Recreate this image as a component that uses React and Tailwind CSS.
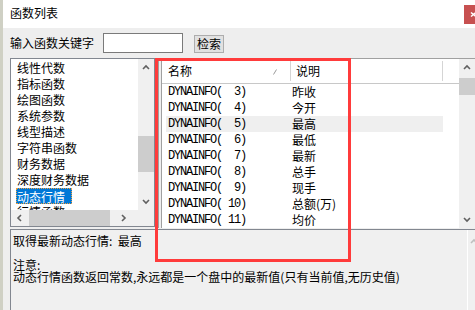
import React from "react";

const Chev = ({ dir = "up", color = "#606060" }) => {
  const paths = {
    up: "M1 5 L4 2 L7 5",
    down: "M1 2 L4 5 L7 2",
    left: "M5 1 L2 4 L5 7",
    right: "M2 1 L5 4 L2 7",
  };
  return (
    <svg width="8" height="8" viewBox="0 0 8 8">
      <path d={paths[dir]} fill="none" stroke={color} strokeWidth="1.6" />
    </svg>
  );
};

const listItems = [
  "线性代数",
  "指标函数",
  "绘图函数",
  "系统参数",
  "线型描述",
  "字符串函数",
  "财务数据",
  "深度财务数据",
  "动态行情",
  "行情函数",
];

const rows = [
  ["DYNAINFO(  3)", "昨收"],
  ["DYNAINFO(  4)", "今开"],
  ["DYNAINFO(  5)", "最高"],
  ["DYNAINFO(  6)", "最低"],
  ["DYNAINFO(  7)", "最新"],
  ["DYNAINFO(  8)", "总手"],
  ["DYNAINFO(  9)", "现手"],
  ["DYNAINFO( 10)", "总额(万)"],
  ["DYNAINFO( 11)", "均价"],
];

export default function App() {
  return (
    <div className="relative flex h-[310px] w-[475px] overflow-hidden bg-[#eeeeee] font-['Noto_Sans_CJK_SC',sans-serif] text-[12px] leading-[16px] text-black">
      <div className="w-[3px] shrink-0 bg-[#cfd0c4]" />
      <div className="flex min-w-0 flex-1 flex-col">
        {/* Title bar */}
        <div className="flex h-[28px] shrink-0 items-start justify-between bg-white">
          <span className="ml-[7px] mt-[5px]">函数列表</span>
          <div className="mt-[5px] flex h-[19px] w-[11px] items-center justify-end overflow-hidden bg-[#c75050]">
            <svg width="5" height="7" viewBox="0 0 5 7">
              <path d="M1 1.5 L6 5.5 M1 5.5 L6 1.5" stroke="white" strokeWidth="1.6" />
            </svg>
          </div>
        </div>

        {/* Search row */}
        <div className="flex h-[30px] shrink-0 items-start pl-[7px]">
          <span className="mt-[7px]">输入函数关键字</span>
          <div className="ml-[9px] mt-[5px] h-[20px] w-[80px] border border-[#7a7a7a] bg-white" />
          <button className="ml-[11px] mt-[7px] flex h-[18px] w-[30px] items-center justify-center border border-[#adadad] bg-[#e1e1e1] leading-[16px]">
            检索
          </button>
        </div>

        {/* Main area */}
        <div className="flex h-[170px] shrink-0 pl-[7px]">
          {/* Left list box */}
          <div className="flex h-[169px] w-[145px] shrink-0 flex-col border border-[#828790] bg-white">
            <div className="flex h-[151px]">
              <div className="flex w-[127px] flex-col overflow-hidden pl-[5px] pt-[1px]">
                {listItems.map((t) => (
                  <div key={t} className="h-[16px] shrink-0 whitespace-nowrap">
                    {t === "动态行情" ? (
                      <span className="inline-block h-[16px] w-[56px] border border-dotted border-[#f0a040] bg-[#0078d7] text-white">
                        {t}
                      </span>
                    ) : (
                      <span className="pl-[1px]">{t}</span>
                    )}
                  </div>
                ))}
              </div>
              <div className="flex w-[16px] flex-col bg-[#f0f0f0]">
                <div className="flex h-[17px] items-center justify-center">
                  <Chev dir="up" />
                </div>
                <div className="h-[60px]" />
                <div className="h-[36px] bg-[#cdcdcd]" />
                <div className="flex-1" />
                <div className="flex h-[17px] items-center justify-center">
                  <Chev dir="down" />
                </div>
              </div>
            </div>
            <div className="flex h-[16px]">
              <div className="flex w-[127px] bg-[#f0f0f0]">
                <div className="flex w-[17px] items-center justify-center">
                  <Chev dir="left" />
                </div>
                <div className="w-[1px]" />
                <div className="w-[81px] bg-[#cdcdcd]" />
                <div className="flex flex-1 items-center justify-center">
                  <Chev dir="right" />
                </div>
              </div>
              <div className="w-[16px] bg-[#f0f0f0]" />
            </div>
          </div>

          {/* Right list view */}
          <div className="ml-[3px] flex h-[170px] min-w-0 flex-1 border-l border-t border-[#a0a0a0]">
            <div className="ml-[2px] flex min-w-0 flex-1 flex-col overflow-hidden border-l border-[#a0a0a0] bg-white">
              <div className="flex h-[25px] shrink-0 items-center border-b border-[#c8c8c8]">
                <div className="relative flex h-[20px] w-[128px] items-center pl-[6px]">
                  名称
                  <svg className="absolute left-[111px] top-[8px]" width="4" height="6" viewBox="0 0 4 6">
                    <path d="M0.5 5.5 L3.5 0.5" stroke="#9a9a9a" strokeWidth="1" />
                  </svg>
                </div>
                <div className="h-[20px] w-[1px] bg-[#d5d5d5]" />
                <div className="flex h-[20px] w-[151px] items-center pl-[5px]">说明</div>
                <div className="h-[20px] w-[1px] bg-[#d5d5d5]" />
              </div>
              {rows.map(([a, b]) => (
                <div
                  key={a}
                  className={`ml-[4px] flex h-[16px] w-[277px] shrink-0 items-center ${b === "最高" ? "bg-[#efefef]" : ""}`}
                >
                  <span className="w-[126px] whitespace-pre pl-[2px] font-['Liberation_Mono',monospace] text-[12px] tracking-[-1.2px]">
                    {a}
                  </span>
                  <span className="whitespace-nowrap">{b}</span>
                </div>
              ))}
            </div>
            <div className="flex w-[16px] shrink-0 flex-col bg-[#f0f0f0]">
              <div className="flex h-[17px] items-center justify-center">
                <Chev dir="up" />
              </div>
              <div className="h-[2px]" />
              <div className="h-[17px] bg-[#cdcdcd]" />
              <div className="flex-1" />
              <div className="flex h-[17px] items-center justify-center">
                <Chev dir="down" />
              </div>
            </div>
          </div>
        </div>

        {/* Bottom pane */}
        <div className="ml-[7px] mt-[1px] flex min-h-0 flex-1 border-l border-t border-[#828790] bg-[#f0f0f0]">
          <div className="flex-1 whitespace-pre pl-[2px] pt-[5px] leading-[12px]">
            <div>取得最新动态行情:  最高</div>
            <div>&nbsp;</div>
            <div>注意:</div>
            <div>动态行情函数返回常数,永远都是一个盘中的最新值(只有当前值,无历史值)</div>
          </div>
          <div className="flex w-[8px] shrink-0 flex-col border-l border-[#ffffff] bg-[#f0f0f0] pt-[8px]">
            <div className="overflow-hidden">
              <div className="ml-[2px]">
                <Chev dir="up" color="#bfbfbf" />
              </div>
            </div>
          </div>
        </div>
      </div>

      {/* Red annotation rectangle */}
      <div className="pointer-events-none absolute left-[155px] top-[58px] h-[204px] w-[196px] border-[3px] border-[#ff3b3b]" />
    </div>
  );
}
